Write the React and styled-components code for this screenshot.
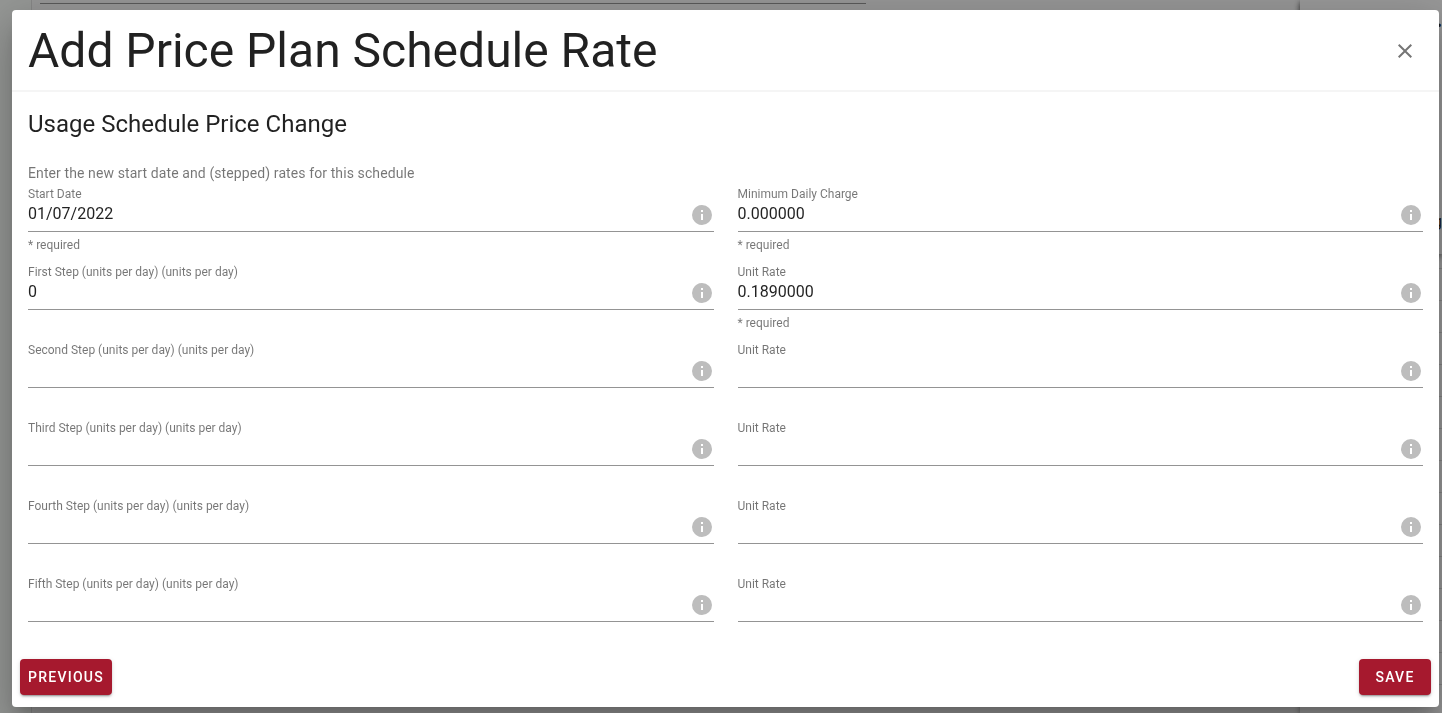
import { useState } from "react";
import styled, { createGlobalStyle, css } from "styled-components";

const primary = "#a6192e";
const textPrimary = "rgba(0, 0, 0, 0.87)";
const textSecondary = "rgba(0, 0, 0, 0.54)";

const GlobalStyle = createGlobalStyle`
  *,
  *::before,
  *::after {
    box-sizing: border-box;
  }

  body {
    margin: 0;
    color: ${textPrimary};
    background: #969696;
    font-family: Roboto, sans-serif;
    font-size: 16px;
    line-height: 24px;
  }
`;

const Page = styled.div`
  display: flex;
  height: 100vh;
  padding-left: 31px;
  overflow: hidden;
  background: #959795;
`;

const PageMain = styled.div`
  flex: 1;
  padding: 3px 8px;
  border-left: 1px solid #868686;
  background: #969696;
`;

const PageField = styled.div`
  width: 66%;
  border-bottom: 1px solid #5a5a5a;
`;

const PageAside = styled.div`
  width: 142px;
  background: #989898;
  box-shadow: 0 2px 6px rgba(0, 0, 0, 0.4);
`;

const AsideCard = styled.div`
  display: flex;
  flex-direction: column;
  justify-content: space-between;
  align-items: flex-end;
  height: 254px;
  padding: 14px 0 20px;
  box-shadow: 0 3px 5px rgba(0, 0, 0, 0.4);
`;

const AsideRows = styled.div`
  padding-top: 14px;
`;

const AsideRow = styled.div`
  height: 32px;
  border-top: 1px solid #848484;
`;

const Overlay = styled.div`
  position: fixed;
  inset: 0;
  display: flex;
  padding: 10px 3px 6px 12px;
`;

const Dialog = styled.section`
  flex: 1;
  display: flex;
  flex-direction: column;
  overflow: hidden;
  background: #fff;
  border-radius: 4px;
  box-shadow:
    0 11px 15px -7px rgba(0, 0, 0, 0.2),
    0 24px 38px 3px rgba(0, 0, 0, 0.14),
    0 9px 46px 8px rgba(0, 0, 0, 0.12);
`;

const Header = styled.header`
  display: flex;
  align-items: center;
  justify-content: space-between;
  height: 82px;
  padding: 2px 16px 0;
  border-bottom: 2px solid #f5f5f5;
`;

const Title = styled.h1`
  margin: 0;
  font-size: 48px;
  font-weight: 400;
  line-height: 48px;
`;

const CloseButton = styled.button`
  display: flex;
  align-items: center;
  justify-content: center;
  width: 36px;
  height: 36px;
  padding: 0;
  border: 0;
  border-radius: 50%;
  color: #757575;
  background: transparent;
  cursor: pointer;
`;

const Body = styled.div`
  flex: 1;
  padding: 16px;
`;

const Subtitle = styled.h2`
  margin: 0;
  font-size: 24px;
  font-weight: 400;
  line-height: 32px;
`;

const Intro = styled.p`
  margin: 22px 0 0;
  color: ${textSecondary};
  font-size: 14px;
  letter-spacing: 0.0071428571em;
  line-height: 22px;
`;

const Fields = styled.div`
  display: grid;
  grid-template-columns: 1fr 1fr;
  column-gap: 24px;
  row-gap: 12px;
  margin-top: 2px;
`;

const Label = styled.label`
  display: block;
  color: ${textSecondary};
  font-size: 12px;
  line-height: 16px;
`;

const InputRow = styled.div`
  display: flex;
  height: 30px;
  border-bottom: 1px solid #949494;
`;

const Input = styled.input`
  flex: 1;
  min-width: 0;
  height: 24px;
  padding: 0;
  border: 0;
  outline: 0;
  color: ${textPrimary};
  background: transparent;
  font: inherit;
`;

const Hint = styled.div`
  height: 20px;
  padding-top: 6px;
  color: ${textSecondary};
  font-size: 12px;
  line-height: 14px;
`;

const Footer = styled.footer`
  display: flex;
  justify-content: space-between;
  padding: 0 8px 12px;
`;

const Button = styled.button`
  min-width: 72px;
  height: 36px;
  padding: 0 16px;
  border: 0;
  border-radius: 4px;
  color: #fff;
  background: ${primary};
  box-shadow:
    0 3px 1px -2px rgba(0, 0, 0, 0.2),
    0 2px 2px 0 rgba(0, 0, 0, 0.14),
    0 1px 5px 0 rgba(0, 0, 0, 0.12);
  font-family: inherit;
  font-size: 14px;
  font-weight: 500;
  letter-spacing: 0.0892857143em;
  text-transform: uppercase;
  cursor: pointer;

  ${({ $compact }) =>
    $compact &&
    css`
      padding: 0 8px;
    `}
`;

const Icon = styled.svg`
  flex: none;
  width: 24px;
  height: 24px;
  fill: currentColor;
`;

const InfoIcon = styled(Icon)`
  margin-top: 1px;
  color: #bdbdbd;
`;

const steps = ["First", "Second", "Third", "Fourth", "Fifth"];

const fields = [
  { id: "startDate", label: "Start Date", value: "01/07/2022", required: true },
  {
    id: "minimumCharge",
    label: "Minimum Daily Charge",
    value: "0.000000",
    required: true,
  },
  ...steps.flatMap((step, i) => [
    {
      id: `step${i}`,
      label: `${step} Step (units per day) (units per day)`,
      value: i === 0 ? "0" : "",
    },
    {
      id: `rate${i}`,
      label: "Unit Rate",
      value: i === 0 ? "0.1890000" : "",
      required: i === 0,
    },
  ]),
];

function TextField({ id, label, value, required }) {
  const [current, setCurrent] = useState(value);

  return (
    <div>
      <Label htmlFor={id}>{label}</Label>
      <InputRow>
        <Input
          id={id}
          type="text"
          value={current}
          onChange={(event) => setCurrent(event.target.value)}
        />
        <InfoIcon viewBox="0 0 24 24" aria-hidden="true">
          <path d="M13,9H11V7H13M13,17H11V11H13M12,2A10,10 0 0,0 2,12A10,10 0 0,0 12,22A10,10 0 0,0 22,12A10,10 0 0,0 12,2Z" />
        </InfoIcon>
      </InputRow>
      <Hint>{required && "* required"}</Hint>
    </div>
  );
}

export default function App() {
  return (
    <>
      <GlobalStyle />
      <Page aria-hidden="true">
        <PageMain>
          <PageField />
        </PageMain>
        <PageAside>
          <AsideCard>
            <span>•</span>
            <span>g</span>
          </AsideCard>
          <AsideRows>
            {Array.from({ length: 14 }, (_, i) => (
              <AsideRow key={i} />
            ))}
          </AsideRows>
        </PageAside>
      </Page>
      <Overlay>
        <Dialog role="dialog" aria-labelledby="dialogTitle">
          <Header>
            <Title id="dialogTitle">Add Price Plan Schedule Rate</Title>
            <CloseButton type="button" aria-label="Close">
              <Icon viewBox="0 0 24 24" aria-hidden="true">
                <path d="M19,6.41L17.59,5L12,10.59L6.41,5L5,6.41L10.59,12L5,17.59L6.41,19L12,13.41L17.59,19L19,17.59L13.41,12L19,6.41Z" />
              </Icon>
            </CloseButton>
          </Header>
          <Body>
            <Subtitle>Usage Schedule Price Change</Subtitle>
            <Intro>
              Enter the new start date and (stepped) rates for this schedule
            </Intro>
            <Fields>
              {fields.map((field) => (
                <TextField key={field.id} {...field} />
              ))}
            </Fields>
          </Body>
          <Footer>
            <Button type="button" $compact>
              Previous
            </Button>
            <Button type="button">Save</Button>
          </Footer>
        </Dialog>
      </Overlay>
    </>
  );
}
